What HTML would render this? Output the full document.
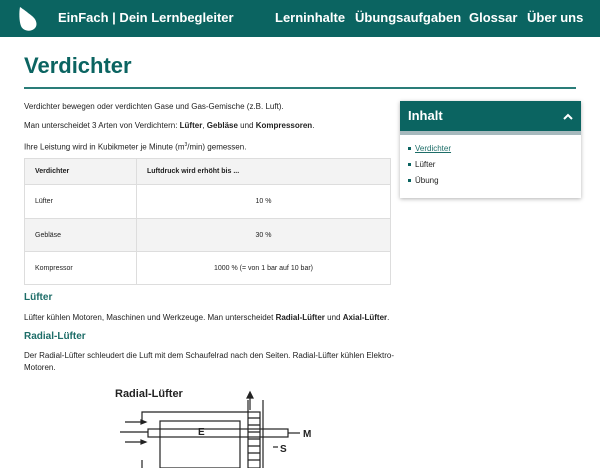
<!DOCTYPE html>
<html><head><meta charset="utf-8"><style>
*{margin:0;padding:0;box-sizing:border-box}
body{width:600px;height:468px;overflow:hidden;background:#fff;font-family:"Liberation Sans",sans-serif;color:#222;position:relative}
.hdr{position:absolute;left:0;top:0;width:600px;height:37px;background:#0b6461;color:#fff;font-weight:bold}
.hdr span{position:absolute;top:10px;font-size:13px}
.a{position:absolute;font-size:8px;line-height:10px}
h1{position:absolute;left:24px;top:53px;font-size:22px;color:#0b6461;font-weight:bold}
.rule{position:absolute;left:24px;top:87px;width:552px;height:2px;background:#2a7d79}
table{position:absolute;left:24px;top:158px;width:367px;border-collapse:collapse;font-size:7px}
td{border:1px solid #ddd;padding:0 10px;vertical-align:middle}
tr.g td{background:#f3f3f3}
h3{position:absolute;font-size:10px;color:#1d6d68;font-weight:bold}
.box{position:absolute;left:400px;top:101px;width:181px;height:97px;box-shadow:0 1px 4px rgba(0,0,0,.3);background:#fff}
.box .t{background:#0b6461;color:#fff;font-weight:bold;font-size:13px;padding:7px 0 0 8px;border-bottom:4px solid #a6b9bd;height:34px;position:relative}
.box li{list-style:none;font-size:8px;margin:0 0 6px 8px;line-height:10px}
.box li:before{content:"";display:inline-block;width:3px;height:3px;background:#0b6461;margin-right:4px;vertical-align:middle}
</style></head><body>
<div class="hdr">
<svg style="position:absolute;left:18px;top:6px" width="20" height="26" viewBox="0 0 20 26"><path d="M2 1 C5 3 9 6 14 10 C19 14 20 20 16 23 C12 26 5 25 3 20 C1 15 1 6 2 1Z" fill="#fff"/></svg>
<span style="left:58px">EinFach | Dein Lernbegleiter</span>
<span style="left:275px">Lerninhalte</span>
<span style="left:355px">Übungsaufgaben</span>
<span style="left:469px">Glossar</span>
<span style="left:527px">Über uns</span>
</div>
<h1>Verdichter</h1>
<div class="rule"></div>
<div class="a" style="left:24px;top:102px">Verdichter bewegen oder verdichten Gase und Gas-Gemische (z.B. Luft).</div>
<div class="a" style="left:24px;top:121px">Man unterscheidet 3 Arten von Verdichtern: <b>Lüfter</b>, <b>Gebläse</b> und <b>Kompressoren</b>.</div>
<div class="a" style="left:24px;top:140px">Ihre Leistung wird in Kubikmeter je Minute (m<sup style="font-size:5px">3</sup>/min) gemessen.</div>
<table>
<tr class="g" style="height:26px"><td style="width:112px"><b>Verdichter</b></td><td><b>Luftdruck wird erhöht bis ...</b></td></tr>
<tr style="height:34px"><td>Lüfter</td><td style="text-align:center">10 %</td></tr>
<tr class="g" style="height:33px"><td>Gebläse</td><td style="text-align:center">30 %</td></tr>
<tr style="height:33px"><td>Kompressor</td><td style="text-align:center">1000 % (= von 1 bar auf 10 bar)</td></tr>
</table>
<h3 style="left:24px;top:292px">Lüfter</h3>
<div class="a" style="left:24px;top:313px">Lüfter kühlen Motoren, Maschinen und Werkzeuge. Man unterscheidet <b>Radial-Lüfter</b> und <b>Axial-Lüfter</b>.</div>
<h3 style="left:24px;top:331px">Radial-Lüfter</h3>
<div class="a" style="left:24px;top:350px;line-height:12px;width:370px">Der Radial-Lüfter schleudert die Luft mit dem Schaufelrad nach den Seiten. Radial-Lüfter kühlen Elektro-Motoren.</div>
<svg style="position:absolute;left:100px;top:380px" width="220" height="88" viewBox="0 0 220 88" font-family="Liberation Sans" font-weight="bold">
<text x="15" y="17" font-size="11" fill="#222">Radial-Lüfter</text>
<g stroke="#222" fill="none" stroke-width="1.2">
<path d="M42 40 V32 H148 V20"/><path d="M42 80 V88"/>
<rect x="60" y="41" width="80" height="47"/>
<rect x="148" y="32" width="12" height="56"/>
<path d="M148 38h12M148 45h12M148 52h12M148 59h12M148 66h12M148 73h12M148 80h12"/>
<path d="M163 20 V88"/>
<path d="M150 30 V15"/><path d="M147 18 L150 12 L153 18Z" fill="#222"/>
<rect x="48" y="49" width="140" height="8"/>
<path d="M188 53 H200"/><path d="M173 67 H178"/>
<path d="M25 42 H46"/><path d="M25 62 H46"/><path d="M20 52 H48"/>
<path d="M46 42 l-5 -2 v4Z M46 62 l-5 -2 v4Z" fill="#222"/>
</g>
<text x="98" y="55" font-size="10" fill="#222">E</text>
<text x="203" y="57" font-size="10" fill="#222">M</text>
<text x="180" y="72" font-size="10" fill="#222">S</text>
</svg>
<div class="box">
<div class="t">Inhalt<svg style="position:absolute;right:8px;top:12px" width="10" height="7" viewBox="0 0 10 7"><path d="M1 6 L5 2 L9 6" stroke="#fff" stroke-width="2" fill="none"/></svg></div>
<ul style="padding-top:9px">
<li><span style="color:#1d6d68;text-decoration:underline">Verdichter</span></li>
<li>Lüfter</li>
<li>Übung</li>
</ul>
</div>
</body></html>
